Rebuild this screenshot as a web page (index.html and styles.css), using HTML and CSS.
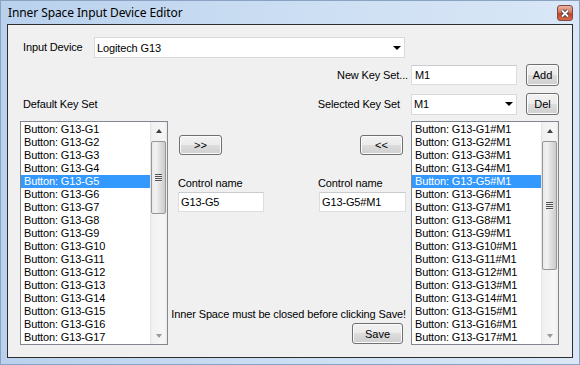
FILE: index.html
```html
<!DOCTYPE html>
<html lang="en">
  <head>
    <meta charset="UTF-8" />
    <title>Inner Space Input Device Editor</title>
    <link rel="stylesheet" href="styles.css">
  </head>
  <body>
    <div class="window">
      <div class="titlebar">
        <span class="title">Inner Space Input Device Editor</span>
        <span class="close">
          <svg width="10" height="9" viewBox="0 0 10 9">
            <path d="M2 1.5 L8 7.5 M8 1.5 L2 7.5" stroke="#3a3a3a" stroke-width="3.6" />
            <path d="M2 1.5 L8 7.5 M8 1.5 L2 7.5" stroke="#ffffff" stroke-width="1.8" />
          </svg>
        </span>
      </div>

      <div class="client">
        <div class="device-row">
          <label class="device-label">Input Device</label>
          <div class="combo wide">
            <span>Logitech G13</span>
            <i class="drop"></i>
          </div>
        </div>

        <div class="set-row">
          <label class="new-label">New Key Set...</label>
          <div class="textbox short">M1</div>
          <button class="btn side" type="button">Add</button>
        </div>

        <div class="set-row third">
          <label>Default Key Set</label>
          <label class="selected-label">Selected Key Set</label>
          <div class="combo short">
            <span>M1</span>
            <i class="drop"></i>
          </div>
          <button class="btn side" type="button">Del</button>
        </div>

        <div class="main">
          <div class="listbox left-list">
            <ul class="items">
              <li>Button: G13-G1</li>
              <li>Button: G13-G2</li>
              <li>Button: G13-G3</li>
              <li>Button: G13-G4</li>
              <li class="selected">Button: G13-G5</li>
              <li>Button: G13-G6</li>
              <li>Button: G13-G7</li>
              <li>Button: G13-G8</li>
              <li>Button: G13-G9</li>
              <li>Button: G13-G10</li>
              <li>Button: G13-G11</li>
              <li>Button: G13-G12</li>
              <li>Button: G13-G13</li>
              <li>Button: G13-G14</li>
              <li>Button: G13-G15</li>
              <li>Button: G13-G16</li>
              <li>Button: G13-G17</li>
            </ul>
            <div class="scrollbar">
              <div class="sb-arrow up"></div>
              <div class="sb-track">
                <div class="sb-thumb short-thumb"><span class="grip"></span></div>
              </div>
              <div class="sb-arrow down"></div>
            </div>
          </div>

          <div class="middle">
            <div class="move-row">
              <button class="btn move" type="button">&gt;&gt;</button>
              <button class="btn move" type="button">&lt;&lt;</button>
            </div>

            <div class="names">
              <div class="name-group">
                <label>Control name</label>
                <div class="textbox name-box">G13-G5</div>
              </div>
              <div class="name-group">
                <label>Control name</label>
                <div class="textbox name-box second">G13-G5#M1</div>
              </div>
            </div>

            <div class="save-area">
              <p class="notice">Inner Space must be closed before clicking Save!</p>
              <button class="btn save" type="button">Save</button>
            </div>
          </div>

          <div class="listbox right-list">
            <ul class="items">
              <li>Button: G13-G1#M1</li>
              <li>Button: G13-G2#M1</li>
              <li>Button: G13-G3#M1</li>
              <li>Button: G13-G4#M1</li>
              <li class="selected">Button: G13-G5#M1</li>
              <li>Button: G13-G6#M1</li>
              <li>Button: G13-G7#M1</li>
              <li>Button: G13-G8#M1</li>
              <li>Button: G13-G9#M1</li>
              <li>Button: G13-G10#M1</li>
              <li>Button: G13-G11#M1</li>
              <li>Button: G13-G12#M1</li>
              <li>Button: G13-G13#M1</li>
              <li>Button: G13-G14#M1</li>
              <li>Button: G13-G15#M1</li>
              <li>Button: G13-G16#M1</li>
              <li>Button: G13-G17#M1</li>
            </ul>
            <div class="scrollbar">
              <div class="sb-arrow up"></div>
              <div class="sb-track">
                <div class="sb-thumb long-thumb"><span class="grip"></span></div>
              </div>
              <div class="sb-arrow down"></div>
            </div>
          </div>
        </div>
      </div>
    </div>
  </body>
</html>
```

FILE: styles.css
```css
* {
  box-sizing: border-box;
}

body {
  margin: 0;
  background-color: #ffffff;
  color: #000000;
  font-family: "Liberation Sans", Arial, sans-serif;
  font-size: 11px;
  letter-spacing: -0.13px;
}

.window {
  width: 580px;
  height: 365px;
  display: flex;
  flex-direction: column;
  padding: 0 7px 7px 7px;
  background: linear-gradient(to right, #b9d1ed, #cddff3 55%, #d9e7f6);
  box-shadow: inset 0 0 0 1px #8aa3c2;
}

.titlebar {
  height: 24px;
  display: flex;
  align-items: flex-start;
  justify-content: space-between;
  padding: 5px 0 0 1px;
}

.title {
  font-family: "Noto Sans", "DejaVu Sans", sans-serif;
  font-size: 12px;
  line-height: 16px;
  letter-spacing: -0.1px;
  color: #000000;
}

.close {
  width: 16px;
  height: 16px;
  display: flex;
  align-items: center;
  justify-content: center;
  border: 1px solid #7f4a42;
  border-radius: 3px;
  background: linear-gradient(#eab2a2, #d8775e 45%, #c4432a 55%, #d8694c);
}

.client {
  flex: 1;
  display: flex;
  flex-direction: column;
  background-color: #f0f0f0;
  border: 1px solid #2e2e2e;
}

label {
  line-height: 13px;
  white-space: nowrap;
}

/* top rows */

.device-row {
  display: flex;
  align-items: center;
  height: 21px;
  margin: 12px 0 0 15px;
}

.device-label {
  width: 71px;
}

.set-row {
  display: flex;
  align-items: center;
  height: 22px;
  margin-top: 6px;
  padding-right: 13px;
}

.set-row.third {
  margin-top: 7px;
  padding-left: 15px;
}

.new-label {
  margin: 0 3px 0 auto;
}

.selected-label {
  margin: 0 11px 0 auto;
}

.combo {
  height: 21px;
  display: flex;
  align-items: center;
  justify-content: space-between;
  padding: 0 2px 0 2px;
  background-color: #ffffff;
  border: 1px solid #d9d9d9;
}

.combo.wide {
  width: 311px;
}

.combo.short {
  width: 106px;
}

.drop {
  width: 0;
  height: 0;
  margin-right: 1px;
  border-left: 4px solid transparent;
  border-right: 4px solid transparent;
  border-top: 4px solid #000000;
}

.textbox {
  height: 20px;
  line-height: 18px;
  padding: 0 2px;
  background-color: #ffffff;
  border: 1px solid #dcdde2;
  border-top-color: #c9cbd1;
  white-space: nowrap;
  overflow: hidden;
}

.textbox.short {
  width: 106px;
  padding-left: 3px;
}

.btn {
  font: inherit;
  color: #000000;
  padding: 0;
  border: 1px solid #707070;
  border-radius: 3px;
  background: linear-gradient(#f2f2f2, #ebebeb 50%, #dddddd 50%, #cfcfcf);
  box-shadow: inset 0 0 0 1px #fbfbfb;
}

.btn.side {
  width: 33px;
  height: 22px;
  margin-left: 9px;
}

/* list area */

.main {
  display: flex;
  height: 224px;
  margin-top: 6px;
}

.listbox {
  width: 148px;
  display: flex;
  background-color: #ffffff;
  border: 1px solid #828790;
}

.left-list {
  margin-left: 12px;
}

.right-list {
  margin-right: 13px;
}

.items {
  flex: 1;
  list-style: none;
  margin: 0;
  padding: 1px 0 0 0;
  overflow: hidden;
}

.items li {
  height: 13px;
  line-height: 13px;
  padding-left: 3px;
  white-space: nowrap;
}

.items li.selected {
  background-color: #3399ff;
  color: #ffffff;
}

.scrollbar {
  width: 17px;
  display: flex;
  flex-direction: column;
  background: linear-gradient(to right, #e2e2e2, #f1f1f1 2px, #f6f6f6 14px, #ebebeb);
}

.sb-arrow {
  height: 17px;
  display: flex;
  align-items: center;
  justify-content: center;
}

.sb-arrow::before {
  content: "";
  width: 0;
  height: 0;
  border-left: 3.5px solid transparent;
  border-right: 3.5px solid transparent;
}

.sb-arrow.up::before {
  border-bottom: 4px solid #3f3f3f;
}

.sb-arrow.down::before {
  border-top: 4px solid #9a9a9a;
}

.sb-track {
  flex: 1;
}

.sb-thumb {
  margin: 2px 1px 0 1px;
  display: flex;
  align-items: center;
  justify-content: center;
  border: 1px solid #979797;
  border-radius: 2px;
  background: linear-gradient(to right, #e9e9e9, #f2f2f2 30%, #e0e0e0 60%, #cbcbcb);
}

.short-thumb {
  height: 73px;
}

.long-thumb {
  height: 129px;
}

.grip {
  width: 7px;
  height: 8px;
  background: repeating-linear-gradient(#4f4f4f 0 1px, #eeeeee 1px 2px);
}

/* middle column */

.middle {
  flex: 1;
  display: flex;
  flex-direction: column;
}

.move-row {
  display: flex;
  justify-content: space-between;
  margin-top: 14px;
  padding: 0 8px 0 11px;
}

.btn.move {
  width: 43px;
  height: 20px;
}

.names {
  display: flex;
  justify-content: space-between;
  margin-top: 22px;
  padding: 0 5px 0 10px;
}

.name-group label {
  display: block;
  margin-bottom: 2px;
}

.name-box {
  width: 86px;
}

.name-box.second {
  width: 87px;
  margin-left: 1px;
}

.save-area {
  margin-top: auto;
  display: flex;
  flex-direction: column;
  align-items: flex-end;
  padding: 0 5px 1px 0;
}

.notice {
  margin: 0;
  line-height: 14px;
  white-space: nowrap;
}

.btn.save {
  width: 51px;
  height: 21px;
  margin: 2px 3px 0 0;
}
```
